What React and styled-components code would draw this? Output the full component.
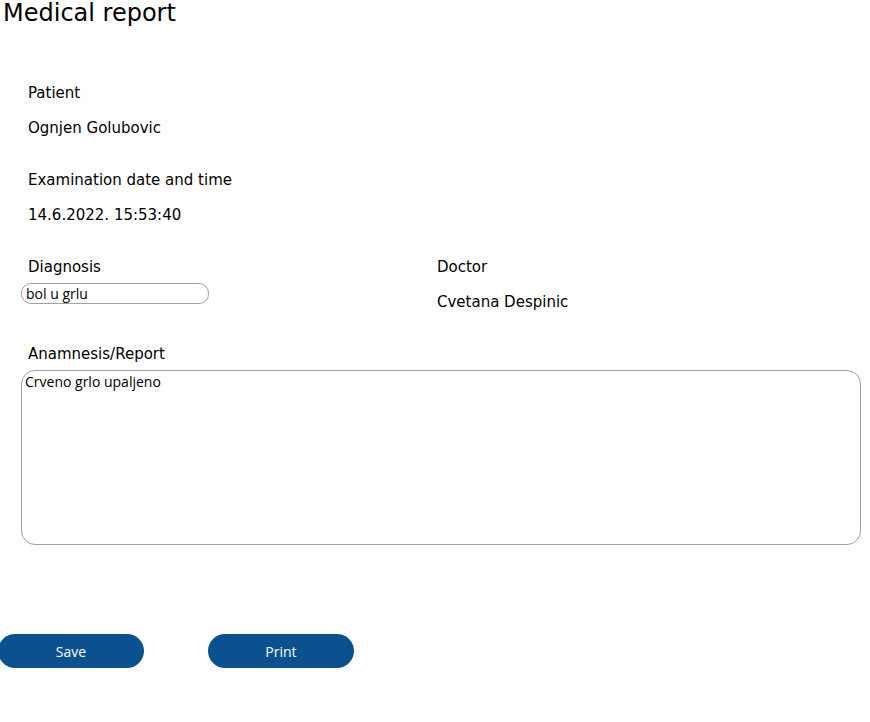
import React, { useState } from "react";
import styled, { createGlobalStyle } from "styled-components";

const GlobalStyle = createGlobalStyle`
  body {
    margin: 0;
    background: #ffffff;
    font-family: "Comic Sans MS", "DejaVu Sans", sans-serif;
    color: #000;
  }
`;

const Page = styled.div`
  width: 870px;
  min-height: 722px;
`;

const Title = styled.h1`
  margin: 0;
  padding: 0 0 0 3px;
  font-size: 24px;
  font-weight: normal;
  line-height: 26px;
`;

const Form = styled.div`
  padding: 58px 0 0 21px;
  width: 840px;
`;

const Field = styled.div`
  display: flex;
  flex-direction: column;
  gap: ${(props) => props.gap ?? 16}px;
  margin-bottom: ${(props) => props.spacing ?? 33}px;
`;

const Label = styled.span`
  padding-left: 7px;
  font-size: 15px;
  line-height: 19px;
`;

const Value = styled.span`
  padding-left: 7px;
  font-size: 15px;
  line-height: 19px;
`;

const Row = styled.div`
  display: grid;
  grid-template-columns: 409px 1fr;
  margin-bottom: 33px;
`;

const TextInput = styled.input`
  box-sizing: border-box;
  width: 188px;
  height: 21px;
  margin: 0;
  padding: 0 4px;
  border: 1px solid #a0a0a0;
  border-radius: 10px;
  font-family: "Open Sans", "Liberation Sans", sans-serif;
  font-size: 14px;
  outline: none;
`;

const TextArea = styled.textarea`
  box-sizing: border-box;
  width: 840px;
  height: 175px;
  margin: 0;
  padding: 1px 3px;
  border: 1px solid #a0a0a0;
  border-radius: 14px;
  font-family: "Open Sans", "Liberation Sans", sans-serif;
  font-size: 14px;
  resize: none;
  outline: none;
`;

const Actions = styled.div`
  display: flex;
  gap: 64px;
  margin-top: 89px;
  margin-left: -2px;
`;

const Button = styled.button`
  width: 146px;
  height: 34px;
  border: none;
  border-radius: 17px;
  background: #0c518f;
  color: #ffffff;
  font-family: "Open Sans", "Liberation Sans", sans-serif;
  font-size: 14px;
  cursor: pointer;
`;

export default function App() {
  const [diagnosis, setDiagnosis] = useState("bol u grlu");
  const [report, setReport] = useState("Crveno grlo upaljeno");

  return (
    <Page>
      <GlobalStyle />
      <Title>Medical report</Title>
      <Form>
        <Field>
          <Label>Patient</Label>
          <Value>Ognjen Golubovic</Value>
        </Field>
        <Field>
          <Label>Examination date and time</Label>
          <Value>14.6.2022. 15:53:40</Value>
        </Field>
        <Row>
          <Field gap={6} spacing={0}>
            <Label>Diagnosis</Label>
            <TextInput
              value={diagnosis}
              onChange={(e) => setDiagnosis(e.target.value)}
            />
          </Field>
          <Field spacing={0}>
            <Label>Doctor</Label>
            <Value>Cvetana Despinic</Value>
          </Field>
        </Row>
        <Field gap={6} spacing={0}>
          <Label>Anamnesis/Report</Label>
          <TextArea value={report} onChange={(e) => setReport(e.target.value)} />
        </Field>
      </Form>
      <Actions>
        <Button>Save</Button>
        <Button>Print</Button>
      </Actions>
    </Page>
  );
}
